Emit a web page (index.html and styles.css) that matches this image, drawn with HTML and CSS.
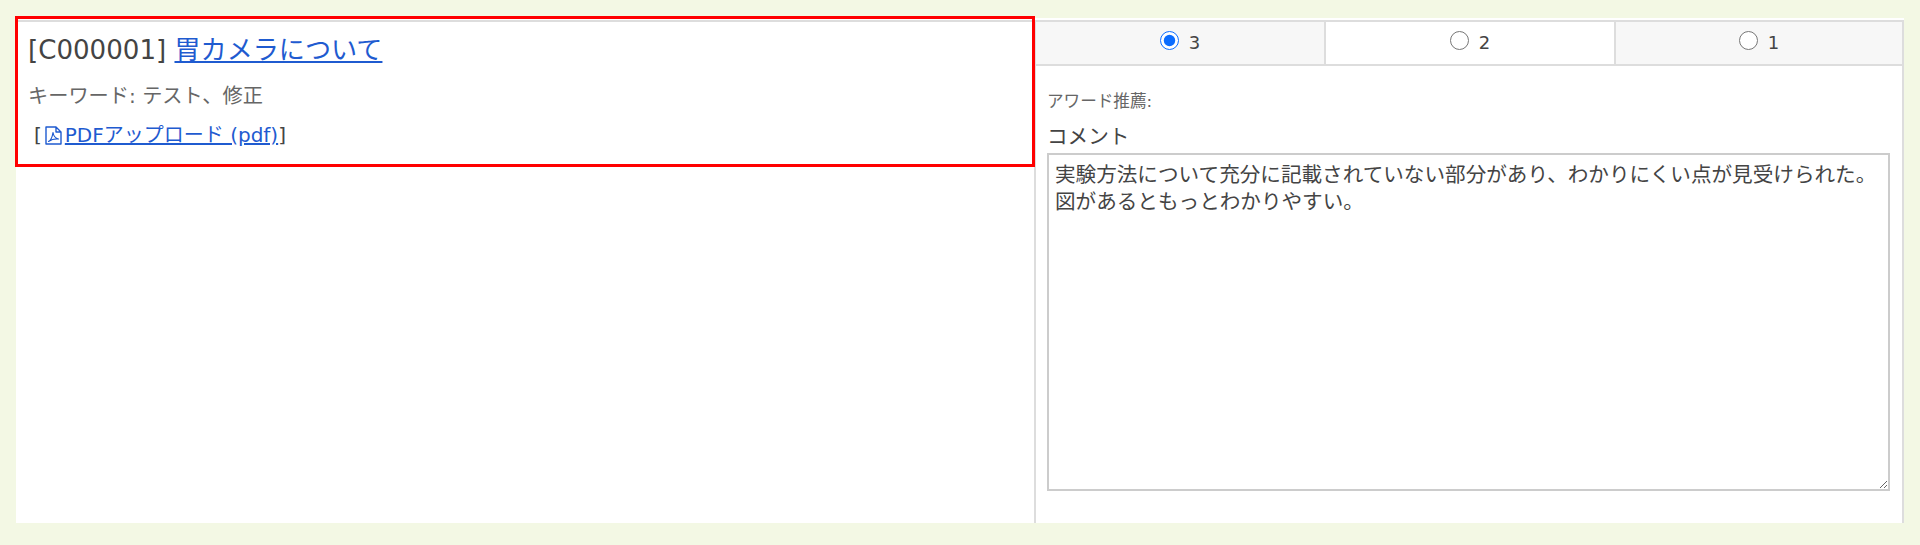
FILE: index.html
```html
<!DOCTYPE html>
<html lang="ja">
<head>
<meta charset="utf-8">
<title>査読</title>
<link rel="stylesheet" href="styles.css">
</head>
<body>
<main class="sheet">
  <section class="info">
    <div class="info-box">
      <h1 class="title">[C000001] <a href="#">胃カメラについて</a></h1>
      <p class="keywords">キーワード: テスト、修正</p>
      <p class="files">[<a href="#"><svg class="pdf" viewBox="0 0 17 19" width="17" height="19" aria-hidden="true"><path d="M1 1h10l5 5v12h-15z M11 1v5h5" fill="none" stroke="currentColor" stroke-width="1.400" stroke-linejoin="round"/><path d="M3.500 15.500c2-1 3.800-4.500 4.500-9 .5 3.500 2 5.500 5.500 6.500-3.500-.3-7 .4-10 2.500z" fill="none" stroke="currentColor" stroke-width="1.200" stroke-linejoin="round"/></svg>PDFアップロード (pdf)</a>]</p>
    </div>
  </section>
  <section class="review">
    <div class="scores">
      <label class="score alt"><input type="radio" name="score" checked><span>3</span></label>
      <label class="score"><input type="radio" name="score"><span>2</span></label>
      <label class="score alt"><input type="radio" name="score"><span>1</span></label>
    </div>
    <div class="form">
      <p class="award">アワード推薦:</p>
      <label class="comment-label" for="comment">コメント</label>
      <textarea id="comment" class="comment">実験方法について充分に記載されていない部分があり、わかりにくい点が見受けられた。
図があるともっとわかりやすい。</textarea>
    </div>
  </section>
</main>
</body>
</html>
```
FILE: styles.css
```css
* { box-sizing: border-box; }
html, body { height: 100%; }
body {
  margin: 0;
  padding: 18px 16px 22px 16px;
  background: #f3f8e4;
  color: #444;
  font-family: "DejaVu Sans", "Noto Sans CJK JP", sans-serif;
  overflow: hidden;
}
.sheet {
  display: flex;
  height: 505px;
  padding-top: 2px;
  background: #fff;
}
.info {
  width: 1018px;
  flex: none;
  border-top: 2px solid #ddd;
}
.info-box {
  position: relative;
  height: 144px;
  padding: 11px 12px 0;
}
.info-box::after {
  content: "";
  position: absolute;
  inset: -6px -1px -1px -1px;
  border: 3px solid #f00;
  pointer-events: none;
}
.title {
  margin: 0;
  font-size: 26.100px;
  font-weight: 400;
  line-height: 34px;
  color: #444;
}
.title a, .files a { color: #1f5bd0; }
.keywords {
  margin: 17px 0 0;
  font-size: 20.200px;
  line-height: 24px;
  color: #666;
}
.files {
  margin: 15px 0 0 6px;
  font-size: 20px;
  line-height: 24px;
}
.pdf { vertical-align: -3px; margin-left: 3px; margin-right: 3px; }
.review {
  flex: 1;
  border-left: 2px solid #ddd;
  border-right: 2px solid #ddd;
  display: flex;
  flex-direction: column;
}
.scores {
  display: grid;
  grid-template-columns: 288px 290px 1fr;
  height: 46px;
  border-top: 2px solid #ddd;
  border-bottom: 2px solid #ddd;
}
.score {
  display: flex;
  align-items: center;
  justify-content: center;
  gap: 10px;
  font-size: 18px;
  line-height: 20px;
  padding-bottom: 1px;
  border-left: 2px solid #ddd;
}
.score:first-child { border-left: 0; }
.score.alt { background: #f7f7f7; }
.score input { margin: 0 0 4px; width: 19px; height: 19px; accent-color: #0a6cff; }
.form { padding: 26px 12px 0 11px; }
.award {
  margin: 0;
  font-size: 16.600px;
  line-height: 20px;
  color: #666;
}
.comment-label {
  display: block;
  margin-top: 12px;
  font-size: 20.600px;
  line-height: 26px;
  color: #444;
}
.comment {
  display: block;
  width: 100%;
  height: 338px;
  margin-top: 3px;
  padding: 7px 6px 6px;
  border: 2px solid #ccc;
  border-radius: 0;
  background: #fff;
  color: #444;
  font: 20.600px/27px "DejaVu Sans", "Noto Sans CJK JP", sans-serif;
  outline: 0;
}
```
